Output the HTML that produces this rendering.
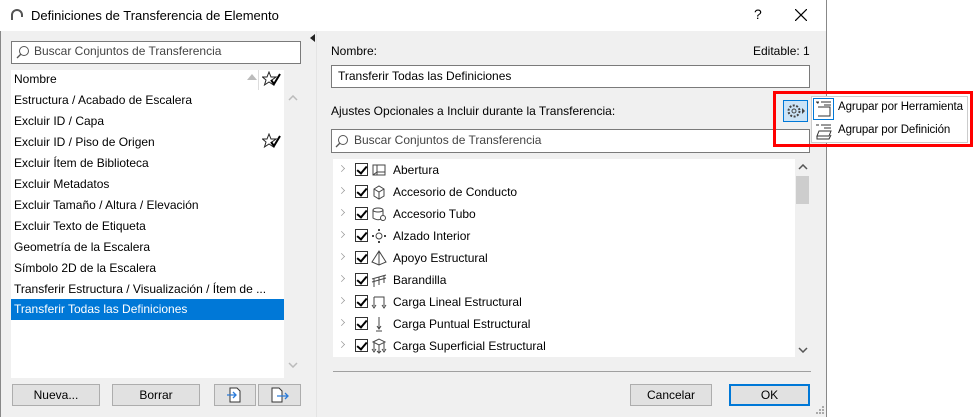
<!DOCTYPE html>
<html><head><meta charset="utf-8"><style>
*{box-sizing:border-box;margin:0;padding:0}
body{width:973px;height:417px;background:#fff;font-family:"Segoe UI","Liberation Sans",sans-serif;font-size:12px;color:#000;position:relative;overflow:hidden}
.abs{position:absolute}
.dlg{left:0;top:0;width:827px;height:417px;background:#f0f0f0;border-right:1px solid #888;border-left:1px solid #888}
.title{left:0;top:0;width:826px;height:31px;background:#fff}
.box{background:#fff;border:1px solid #7a7a7a}
.row{position:absolute;left:3px;height:21px;line-height:21px;white-space:nowrap}
.btn{background:#e1e1e1;border:1px solid #adadad;text-align:center;line-height:20px;height:22px}
.tr{position:absolute;left:0;height:22px;line-height:22px;white-space:nowrap;width:460px}
.tr .ch{position:absolute;left:5px;top:6px;width:7px;height:7px;border-right:1px solid #999;border-top:1px solid #999;transform:rotate(45deg) scale(.7)}
.tr .cb{position:absolute;left:22px;top:4px;width:13px;height:13px;border:1px solid #333;background:#fff}
.tr .cb::after{content:"";position:absolute;left:3px;top:0px;width:4px;height:8px;border-right:2px solid #000;border-bottom:2px solid #000;transform:rotate(40deg)}
.tr .ic{position:absolute;left:38px;top:3px;width:16px;height:16px}
.tr .t{position:absolute;left:60px}
</style></head><body>
<div class="abs dlg"></div>
<div class="abs title"></div>
<svg class="abs" style="left:10px;top:9px" width="14" height="12"><path d="M2 11 V6 A5 5 0 0 1 12 6 V8" fill="none" stroke="#555" stroke-width="2"/></svg>
<div class="abs" style="left:31px;top:8px;font-size:13px">Definiciones de Transferencia de Elemento</div>
<div class="abs" style="left:754px;top:6px;font-size:14px">?</div>
<svg class="abs" style="left:795px;top:9px" width="12" height="12"><path d="M0 0L12 12M12 0L0 12" stroke="#000" stroke-width="1.2"/></svg>

<!-- left -->
<div class="abs box" style="left:11px;top:41px;width:290px;height:23px"></div>
<svg class="abs" style="left:16px;top:45px" width="14" height="14"><circle cx="8" cy="6" r="4.5" fill="none" stroke="#555"/><path d="M5 9L1 13" stroke="#555" stroke-width="1.3"/></svg>
<div class="abs" style="left:34px;top:44px;color:#444">Buscar Conjuntos de Transferencia</div>
<div class="abs" style="left:11px;top:70px;width:273px;height:308px;background:#fff"></div>
<div class="abs" style="left:258px;top:70px;width:1px;height:20px;background:#ddd"></div>
<div class="abs" style="left:11px;top:70px;width:273px">
<div class="row" style="top:-1px">Nombre</div>
<div class="row" style="top:20px">Estructura / Acabado de Escalera</div>
<div class="row" style="top:41px">Excluir ID / Capa</div>
<div class="row" style="top:62px">Excluir ID / Piso de Origen</div>
<div class="row" style="top:83px">Excluir Ítem de Biblioteca</div>
<div class="row" style="top:104px">Excluir Metadatos</div>
<div class="row" style="top:125px">Excluir Tamaño / Altura / Elevación</div>
<div class="row" style="top:146px">Excluir Texto de Etiqueta</div>
<div class="row" style="top:167px">Geometría de la Escalera</div>
<div class="row" style="top:188px">Símbolo 2D de la Escalera</div>
<div class="row" style="top:209px">Transferir Estructura / Visualización / Ítem de ...</div>
<div class="row" style="top:229px;left:0;width:273px;background:#0078d7;color:#fff;padding-left:3px">Transferir Todas las Definiciones</div>
</div>
<div class="abs" style="left:247px;top:74px;width:0;height:0;border-left:5px solid transparent;border-right:5px solid transparent;border-bottom:6px solid #bbb"></div>
<svg class="abs" style="left:262px;top:71px" width="20" height="16"><path d="M7 1L9 6H14L10 9L11.5 14L7 11L2.5 14L4 9L0.5 6H5Z" fill="none" stroke="#222"/><path d="M9 9L12 13L18 3" fill="none" stroke="#000" stroke-width="2"/></svg>
<svg class="abs" style="left:262px;top:133px" width="20" height="16"><path d="M7 1L9 6H14L10 9L11.5 14L7 11L2.5 14L4 9L0.5 6H5Z" fill="none" stroke="#222"/><path d="M9 9L12 13L18 3" fill="none" stroke="#000" stroke-width="2"/></svg>
<svg class="abs" style="left:288px;top:95px" width="10" height="6"><path d="M1 5L5 1L9 5" fill="none" stroke="#bbb" stroke-width="1.5"/></svg>
<svg class="abs" style="left:288px;top:362px" width="10" height="6"><path d="M1 1L5 5L9 1" fill="none" stroke="#bbb" stroke-width="1.5"/></svg>
<div class="abs btn" style="left:12px;top:384px;width:88px">Nueva...</div>
<div class="abs btn" style="left:112px;top:384px;width:88px">Borrar</div>
<div class="abs btn" style="left:214px;top:384px;width:42px"></div>
<div class="abs btn" style="left:258px;top:384px;width:43px"></div>
<svg class="abs" style="left:226px;top:386px" width="18" height="18"><path d="M4 2H11L14 5V16H4Z" fill="#fff" stroke="#333"/><path d="M1 9H10M7 6L10 9L7 12" fill="none" stroke="#2a7ad8" stroke-width="1.3"/></svg>
<svg class="abs" style="left:270px;top:386px" width="20" height="18"><path d="M2 2H9L12 5V16H2Z" fill="#fff" stroke="#333"/><path d="M7 10H18M15 7L18 10L15 13" fill="none" stroke="#2a7ad8" stroke-width="1.3"/></svg>

<!-- divider -->
<div class="abs" style="left:316px;top:31px;width:1px;height:386px;background:#e4e4e4"></div>
<div class="abs" style="left:310px;top:34px;width:0;height:0;border-top:4px solid transparent;border-bottom:4px solid transparent;border-right:5px solid #222"></div>

<!-- right -->
<div class="abs" style="left:331px;top:44px">Nombre:</div>
<div class="abs" style="left:753px;top:44px">Editable: 1</div>
<div class="abs box" style="left:331px;top:65px;width:479px;height:23px;padding:3px 6px">Transferir Todas las Definiciones</div>
<div class="abs" style="left:331px;top:104px">Ajustes Opcionales a Incluir durante la Transferencia:</div>
<div class="abs box" style="left:331px;top:129px;width:479px;height:24px"></div>
<svg class="abs" style="left:335px;top:134px" width="14" height="14"><circle cx="8" cy="6" r="4.5" fill="none" stroke="#555"/><path d="M5 9L1 13" stroke="#555" stroke-width="1.3"/></svg>
<div class="abs" style="left:354px;top:133px;color:#444">Buscar Conjuntos de Transferencia</div>
<div class="abs" style="left:333px;top:159px;width:462px;height:198px;background:#fff"></div>
<div class="abs" style="left:795px;top:159px;width:15px;height:198px;background:#f0f0f0"></div>
<div class="abs" style="left:796px;top:176px;width:13px;height:28px;background:#cdcdcd"></div>
<svg class="abs" style="left:798px;top:164px" width="10" height="6"><path d="M1 5L5 1L9 5" fill="none" stroke="#555" stroke-width="1.5"/></svg>
<svg class="abs" style="left:798px;top:347px" width="10" height="6"><path d="M1 1L5 5L9 1" fill="none" stroke="#555" stroke-width="1.5"/></svg>
<div class="abs" style="left:333px;top:159px">
<div class="tr" style="top:0"><span class="ch"></span><span class="cb"></span><svg class="ic"><path d="M2 3H14V13H2ZM6 3V13M2 13L6 10H14" fill="none" stroke="#444"/></svg><span class="t">Abertura</span></div>
<div class="tr" style="top:22px"><span class="ch"></span><span class="cb"></span><svg class="ic"><path d="M3 5L8 2L13 5V12L8 15L3 12ZM3 5L8 8L13 5M8 8V15" fill="none" stroke="#444"/></svg><span class="t">Accesorio de Conducto</span></div>
<div class="tr" style="top:44px"><span class="ch"></span><span class="cb"></span><svg class="ic"><ellipse cx="7" cy="4" rx="5" ry="2" fill="none" stroke="#444"/><path d="M2 4V12Q7 15 10 13M12 4V9" fill="none" stroke="#444"/><circle cx="12" cy="12" r="2.5" fill="none" stroke="#444"/></svg><span class="t">Accesorio Tubo</span></div>
<div class="tr" style="top:66px"><span class="ch"></span><span class="cb"></span><svg class="ic"><circle cx="8" cy="8" r="3" fill="none" stroke="#444"/><path d="M8 1V3M8 13V15M1 8H3M13 8H15" stroke="#444" stroke-width="2"/></svg><span class="t">Alzado Interior</span></div>
<div class="tr" style="top:88px"><span class="ch"></span><span class="cb"></span><svg class="ic"><path d="M8 1L1 12L8 15L15 12ZM8 1V15" fill="none" stroke="#444"/></svg><span class="t">Apoyo Estructural</span></div>
<div class="tr" style="top:110px"><span class="ch"></span><span class="cb"></span><svg class="ic"><path d="M1 7L15 3M3 15V7M8 13V5M13 11V4M1 10L15 6" fill="none" stroke="#444"/></svg><span class="t">Barandilla</span></div>
<div class="tr" style="top:132px"><span class="ch"></span><span class="cb"></span><svg class="ic"><path d="M3 3H13V8M3 3V12M13 8V12M1 11L3 14L5 11M11 11L13 14L15 11" fill="none" stroke="#444"/></svg><span class="t">Carga Lineal Estructural</span></div>
<div class="tr" style="top:154px"><span class="ch"></span><span class="cb"></span><svg class="ic"><path d="M8 1V12M6 10L8 13L10 10M5 15H11" fill="none" stroke="#444"/></svg><span class="t">Carga Puntual Estructural</span></div>
<div class="tr" style="top:176px"><span class="ch"></span><span class="cb"></span><svg class="ic"><path d="M2 4L8 1L14 4L8 7ZM3 5V12M8 7V14M13 5V12M1 11L3 14L5 11M6 13L8 15L10 13M11 11L13 14L15 11" fill="none" stroke="#444"/></svg><span class="t">Carga Superficial Estructural</span></div>
</div>
<div class="abs" style="left:333px;top:371px;width:478px;height:1px;background:#a0a0a0"></div>
<div class="abs btn" style="left:630px;top:384px;width:82px">Cancelar</div>
<div class="abs btn" style="left:729px;top:384px;width:81px;border:2px solid #0078d7;line-height:18px">OK</div>

<!-- popup -->
<div class="abs" style="left:783px;top:100px;width:25px;height:22px;background:#cce4f7;border:1px solid #0078d7"></div>
<svg class="abs" style="left:785px;top:102px" width="22" height="18"><circle cx="9" cy="9" r="5.5" fill="none" stroke="#444" stroke-dasharray="2 1.5" stroke-width="2"/><circle cx="9" cy="9" r="2" fill="none" stroke="#444"/><path d="M17 6L20 9L17 12Z" fill="#444"/></svg>
<div class="abs" style="left:811px;top:96px;width:157px;height:47px;background:#fff;border:1px solid #ccc"></div>
<div class="abs" style="left:813px;top:98px;width:21px;height:22px;border:1px solid #0078d7"></div>
<svg class="abs" style="left:815px;top:100px" width="18" height="18"><path d="M1 2H4M6 2H16M9 5H16M3 7H15V16H3" fill="none" stroke="#333"/><path d="M1 2L3 4L4 2" fill="#333"/></svg>
<svg class="abs" style="left:815px;top:123px" width="18" height="18"><path d="M1 2H4M6 2H16M9 5H16M4 8H16L14 13H2ZM2 13V16H14L16 12" fill="none" stroke="#333"/></svg>
<div class="abs" style="left:838px;top:101px;font-size:11.5px;letter-spacing:-0.1px">Agrupar por Herramienta</div>
<div class="abs" style="left:838px;top:124px;font-size:11.5px;letter-spacing:-0.1px">Agrupar por Definición</div>
<div class="abs" style="left:773px;top:91px;width:200px;height:56px;border:3px solid #f00"></div>
<svg class="abs" style="left:815px;top:405px" width="10" height="10"><g fill="#aaa"><rect x="7" y="1" width="2" height="2"/><rect x="4" y="4" width="2" height="2"/><rect x="7" y="4" width="2" height="2"/><rect x="1" y="7" width="2" height="2"/><rect x="4" y="7" width="2" height="2"/><rect x="7" y="7" width="2" height="2"/></g></svg>
</body></html>
